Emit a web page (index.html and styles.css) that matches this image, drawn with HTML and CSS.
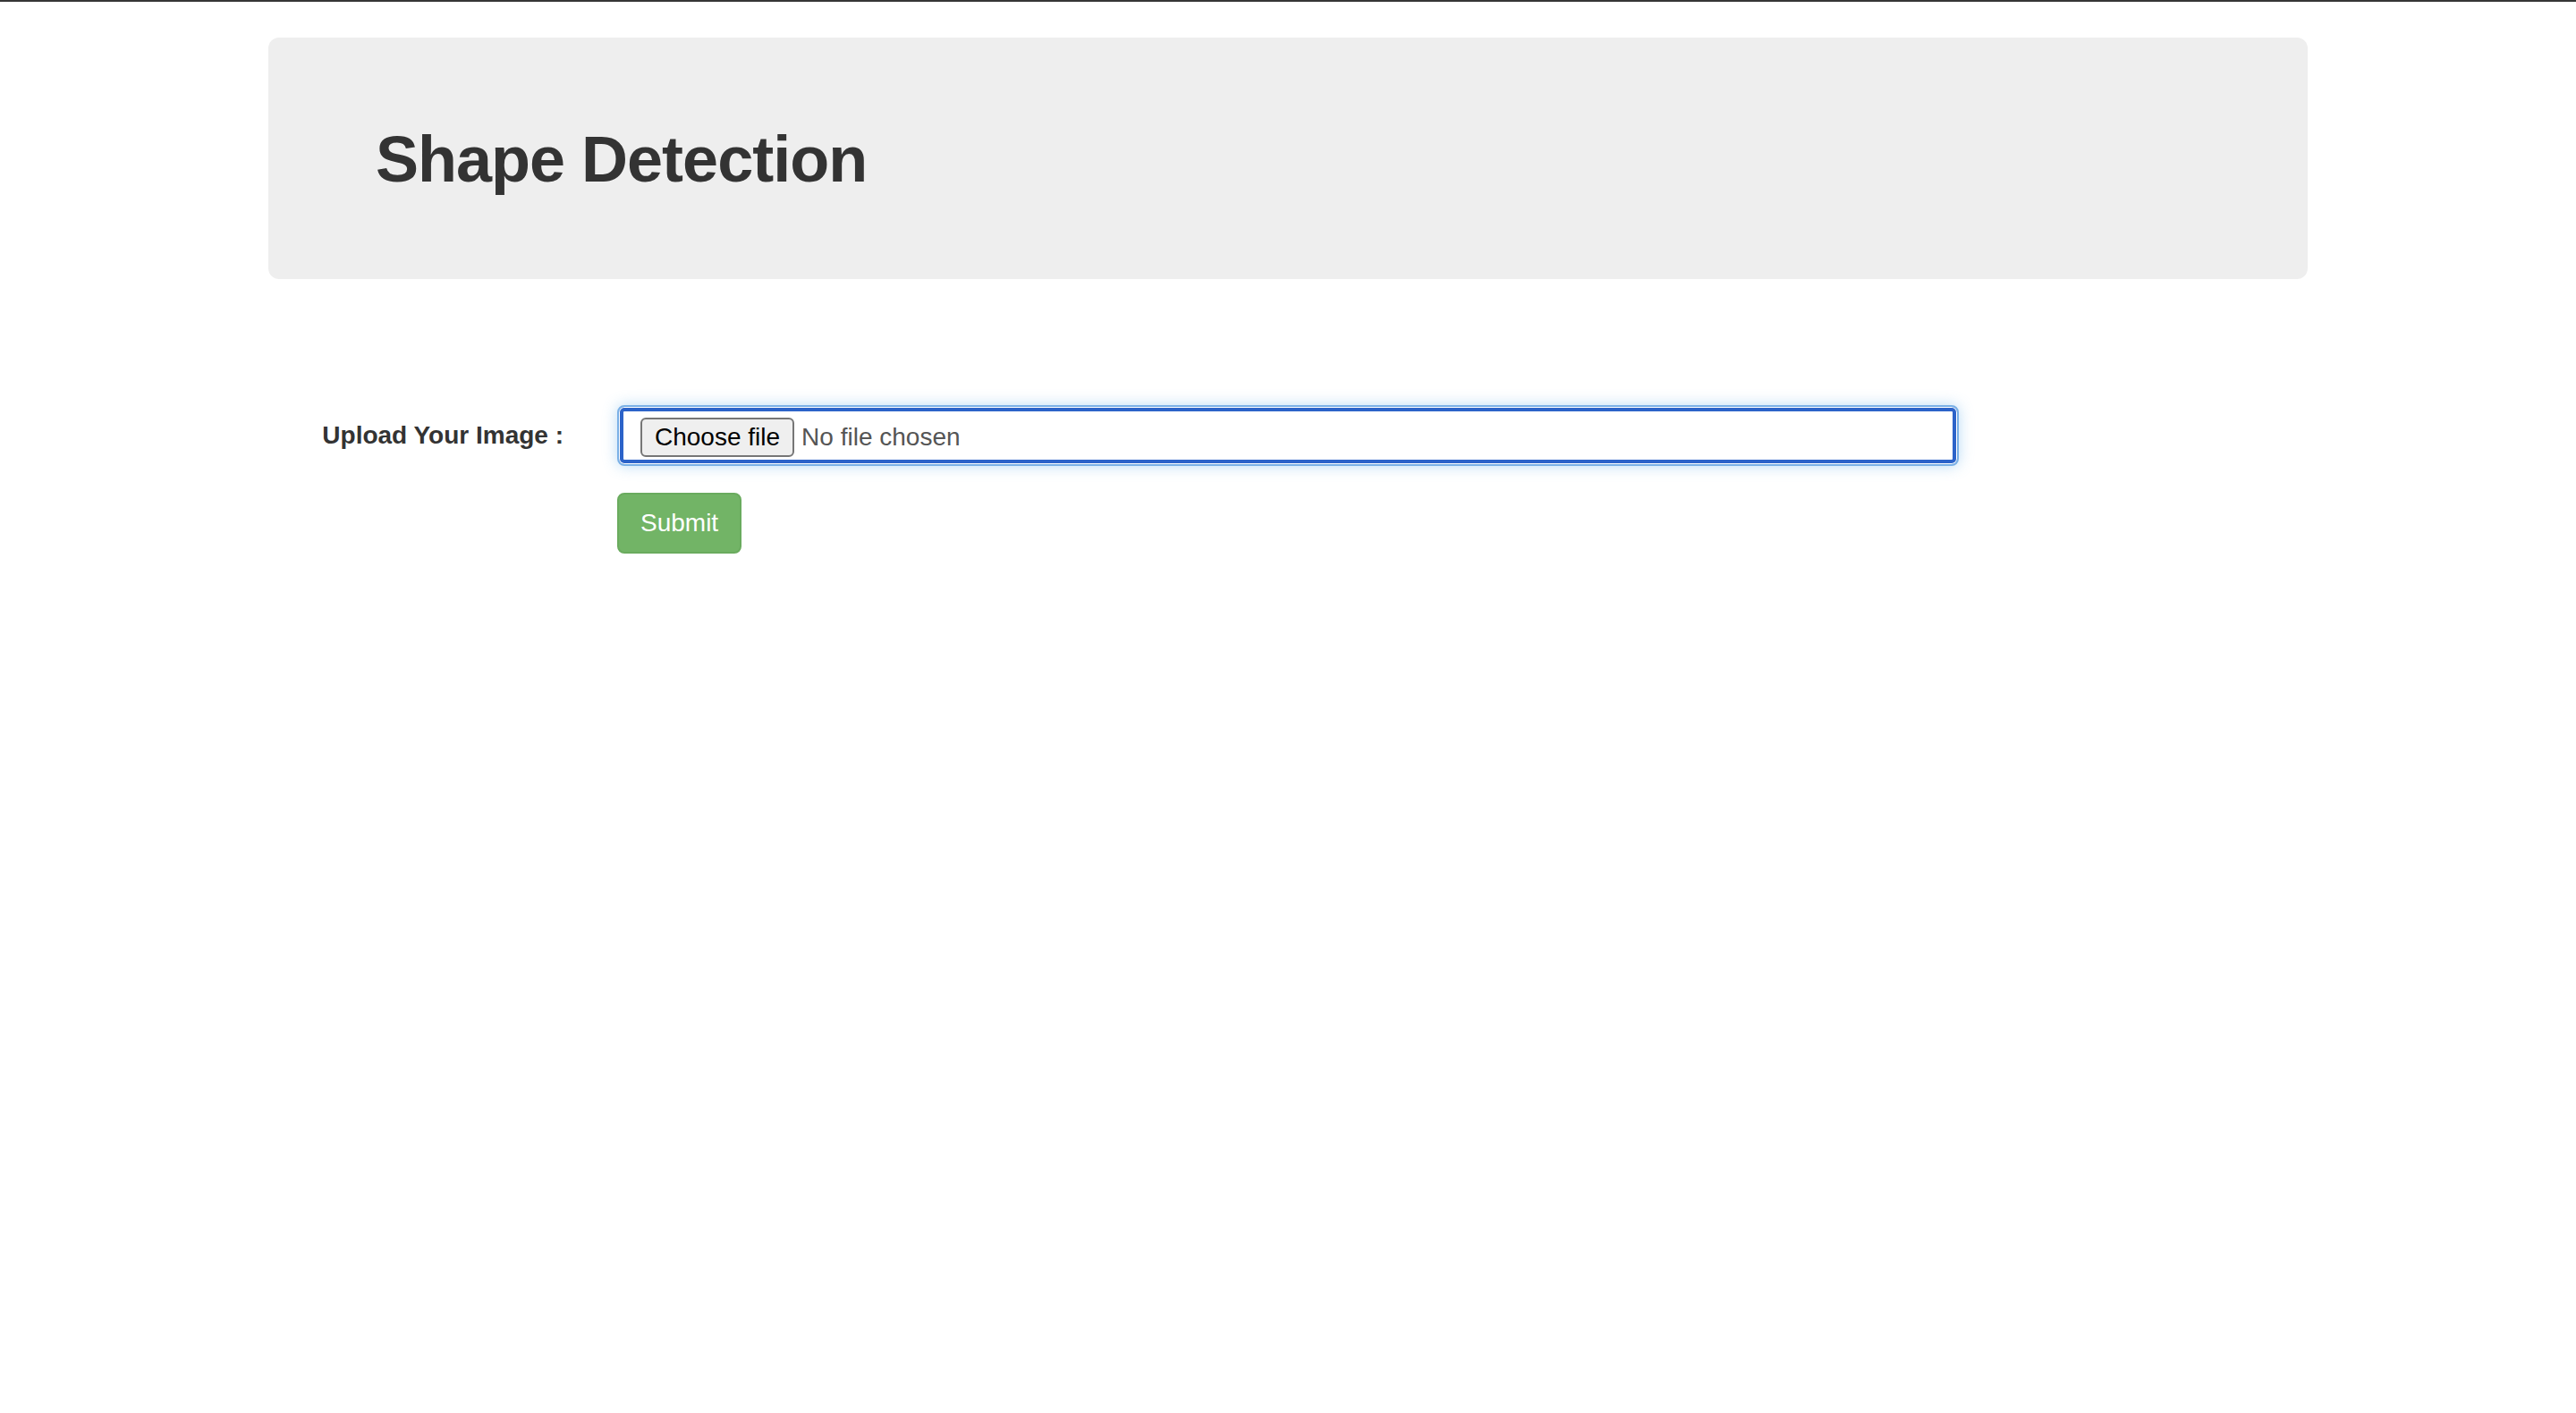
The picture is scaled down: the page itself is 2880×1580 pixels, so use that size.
FILE: index.html
```html
<!DOCTYPE html>
<html lang="en">
<head>
<meta charset="utf-8">
<title>Shape Detection</title>
<link rel="stylesheet" href="styles.css">
</head>
<body>
<div class="topbar"></div>
<div class="container">
  <div class="jumbotron">
    <h1 class="title">Shape Detection</h1>
  </div>
  <form class="form">
    <div class="form-group">
      <label class="control-label" for="image">Upload Your Image :</label>
      <label class="file-field">
        <input type="file" id="image" class="file-hidden">
        <span class="file-btn">Choose file</span>
        <span class="file-name">No file chosen</span>
      </label>
    </div>
    <div class="form-group">
      <span class="spacer"></span>
      <div class="actions"><button type="submit" class="btn-success">Submit</button></div>
    </div>
  </form>
</div>
</body>
</html>
```
FILE: styles.css
```css
* { box-sizing: border-box; }
html, body { margin: 0; padding: 0; background: #fff; }
body {
  font-family: "Liberation Sans", Arial, Helvetica, sans-serif;
  color: #333;
  font-size: 28px;
  line-height: 40px;
}
.topbar { height: 2px; background: #363636; }
.container { width: 2280px; margin: 0 auto; }
.jumbotron {
  margin-top: 40px;
  background: #eeeeee;
  border-radius: 12px;
  padding: 99px 120px 97px;
}
.title {
  margin: 0;
  font-size: 72px;
  line-height: 74px;
  font-weight: 700;
  letter-spacing: -1px;
  color: #333;
}
.form { margin-top: 141px; }
.form-group {
  display: grid;
  grid-template-columns: 330px 1500px;
  column-gap: 60px;
  margin-bottom: 30px;
}
.control-label {
  font-weight: 700;
  text-align: right;
  padding-top: 14px;
  line-height: 40px;
  color: #333;
}
.file-field {
  height: 68px;
  display: flex;
  align-items: center;
  padding: 0 24px;
  border: 2px solid #7ab0e6;
  border-radius: 8px;
  background: #fff;
  box-shadow: inset 0 0 0 1px #fff, inset 0 0 0 5px #2c63c9, 0 0 16px rgba(102, 175, 233, 0.45);
}
.file-hidden { display: none; }
.file-btn {
  height: 44px;
  line-height: 40px;
  margin-top: 4px;
  padding: 0 14px;
  border: 2px solid #767676;
  border-radius: 6px;
  background: #efefef;
  color: #000;
  font-size: 28px;
  white-space: nowrap;
}
.file-name {
  margin-left: 8px;
  margin-top: 4px;
  color: #555;
  font-size: 28px;
  white-space: nowrap;
}
.actions { display: flex; }
.btn-success {
  height: 68px;
  padding: 0 24px;
  border: 2px solid #6aab5e;
  border-radius: 8px;
  background: #72b466;
  color: #fff;
  font-family: "Liberation Sans", Arial, Helvetica, sans-serif;
  font-size: 28px;
  line-height: 40px;
  cursor: pointer;
}
```
